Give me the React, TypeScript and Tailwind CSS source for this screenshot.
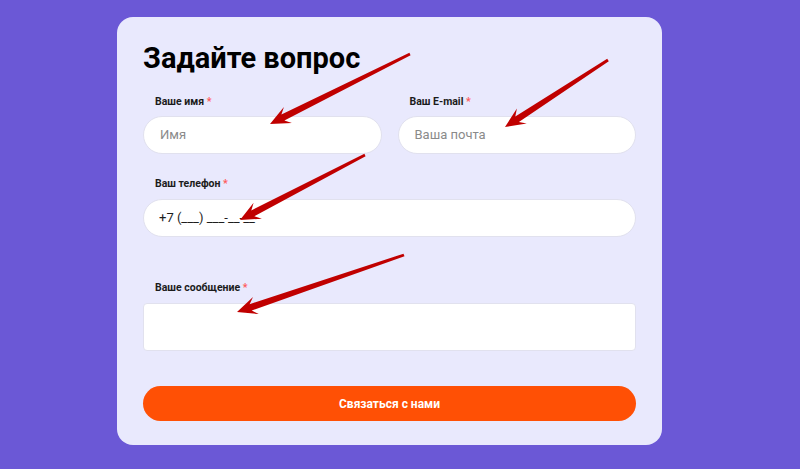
import React from 'react';

type Pt = [number, number];

// tapered red arrow, tail -> tip
const arrowPoints = (tail: Pt, tip: Pt) => {
  const dx = tip[0] - tail[0];
  const dy = tip[1] - tail[1];
  const len = Math.hypot(dx, dy);
  const ux = dx / len, uy = dy / len;
  const nx = -uy, ny = ux;
  const L = 20, W = 9;
  const neck: Pt = [tip[0] - ux * L * 0.72, tip[1] - uy * L * 0.72];
  const base: Pt = [tip[0] - ux * L, tip[1] - uy * L];
  const p = (x: number, y: number) => `${x.toFixed(1)},${y.toFixed(1)}`;
  return [
    p(tail[0] + nx * 1.4, tail[1] + ny * 1.4),
    p(neck[0] + nx * 3.3, neck[1] + ny * 3.3),
    p(base[0] + nx * W, base[1] + ny * W),
    p(tip[0], tip[1]),
    p(base[0] - nx * W, base[1] - ny * W),
    p(neck[0] - nx * 3.3, neck[1] - ny * 3.3),
    p(tail[0] - nx * 1.4, tail[1] - ny * 1.4),
  ].join(' ');
};

const arrows: [Pt, Pt][] = [
  [[410, 54], [270, 124]],
  [[608, 60], [505, 127]],
  [[365, 155], [240, 220]],
  [[404, 255], [237, 312]],
];

const Label = ({ children }: { children: React.ReactNode }) => (
  <div className="text-[10.5px] leading-[14px] font-bold text-[#1b1b1b] pl-[12px]">
    {children} <span className="text-[#ff5a5a]">*</span>
  </div>
);

export default function App() {
  return (
    <div
      className="relative w-[800px] h-[469px] bg-[#6b58d6] pt-[17px] pl-[117px] overflow-hidden"
      style={{ fontFamily: 'Roboto, "Liberation Sans", sans-serif' }}
    >
      <div className="w-[545px] h-[428px] bg-[#e9e9fd] rounded-[16px] px-[26px] pt-[24px]">
        <h1 className="text-[29px] leading-[34px] font-bold text-black">Задайте вопрос</h1>

        <div className="flex gap-[16px] mt-[20px]">
          <div className="flex-1">
            <Label>Ваше имя</Label>
            <div className="mt-[7px] h-[38px] bg-white rounded-full border border-[#e1e1ee] flex items-center px-[16px] text-[13px] text-[#8a8a8a]">
              Имя
            </div>
          </div>
          <div className="flex-1">
            <Label>Ваш E-mail</Label>
            <div className="mt-[7px] h-[38px] bg-white rounded-full border border-[#e1e1ee] flex items-center px-[16px] text-[13px] text-[#8a8a8a]">
              Ваша почта
            </div>
          </div>
        </div>

        <div className="mt-[23px]">
          <Label>Ваш телефон</Label>
          <div className="mt-[8px] h-[38px] bg-white rounded-full border border-[#e1e1ee] flex items-center px-[15px] text-[13px] text-[#1e1e1e]">
            +7 (___) ___-__-__
          </div>
        </div>

        <div className="mt-[44px]">
          <Label>Ваше сообщение</Label>
          <div className="mt-[8px] h-[48px] bg-white rounded-[4px] border border-[#e1e1ee]" />
        </div>

        <button className="mt-[35px] w-full h-[35px] rounded-full bg-[#ff5005] text-white text-[12px] font-bold">
          Связаться с нами
        </button>
      </div>

      <svg className="absolute inset-0 pointer-events-none" width="800" height="469">
        {arrows.map(([a, b], i) => (
          <polygon key={i} points={arrowPoints(a, b)} fill="#c00000" />
        ))}
      </svg>
    </div>
  );
}
